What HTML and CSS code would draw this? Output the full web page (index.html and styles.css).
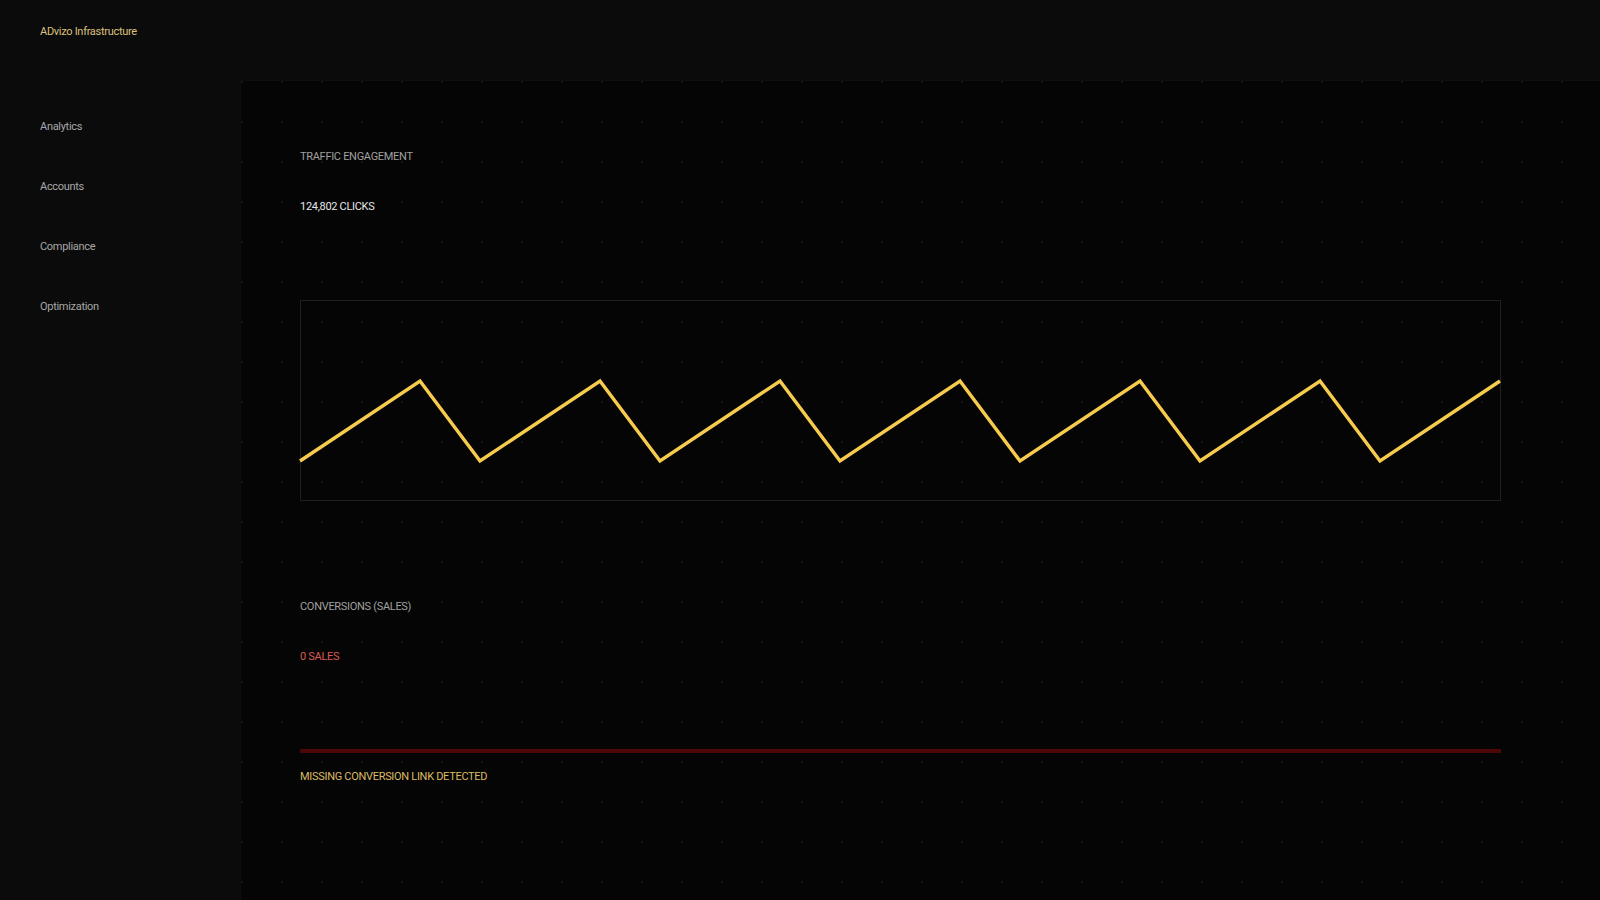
FILE: index.html
```html
<!DOCTYPE html>
<html lang="en">
	<head>
		<meta charset="UTF-8">
		<title>ADvizo Infrastructure</title>
		<link rel="stylesheet" href="styles.css">
	</head>
	<body>
		<div class="shell">
			<div class="topbar">
				<div class="brand">ADvizo Infrastructure</div>
			</div>
			<div class="layout">
				<div class="sidebar">
					<div class="nav-item">Analytics</div>
					<div class="nav-item">Accounts</div>
					<div class="nav-item">Compliance</div>
					<div class="nav-item">Optimization</div>
				</div>
				<div class="panel">
					<div class="content">
						<div class="label">TRAFFIC ENGAGEMENT</div>
						<div class="value">124,802 CLICKS</div>
						<div class="chart">
							<svg class="chart-svg" viewBox="0 0 1200 200" preserveAspectRatio="none">
								<polyline points="0,160 120,80 180,160 300,80 360,160 480,80 540,160 660,80 720,160 840,80 900,160 1020,80 1080,160 1200,80" />
							</svg>
						</div>

						<div class="label label-second">CONVERSIONS (SALES)</div>
						<div class="value value-alert">0 SALES</div>
						<div class="alert-bar"></div>
						<div class="warning">MISSING CONVERSION LINK DETECTED</div>
					</div>
				</div>
			</div>
		</div>
	</body>
</html>
```

FILE: styles.css
```css
html, body {
	margin: 0;
	padding: 0;
	background-color: #0b0b0b;
	font-family: Roboto, "Liberation Sans", Arial, sans-serif;
	font-size: 11px;
	letter-spacing: -0.3px;
}

.shell {
	width: 1600px;
	height: 900px;
	display: flex;
	flex-direction: column;
	overflow: hidden;
}

.topbar {
	height: 80px;
	flex: none;
	padding: 25px 40px 0;
	box-sizing: border-box;
}

.brand {
	color: #dcc17e;
	line-height: 14px;
}

.layout {
	flex: 1;
	display: flex;
}

.sidebar {
	width: 240px;
	flex: none;
	padding: 40px 40px 0;
	box-sizing: border-box;
}

.nav-item {
	color: #a8a8a8;
	line-height: 14px;
	margin-bottom: 46px;
}

.panel {
	flex: 1;
	background-color: #050505;
	background-image: radial-gradient(circle, #151515 1px, transparent 1.2px);
	background-size: 40px 40px;
	background-position: 21px 21px;
	border-left: 1px solid #0e0e0e;
	border-top: 1px solid #0e0e0e;
	padding: 69px 59px 0;
}

.content {
	width: 1201px;
}

.label {
	color: #a0a0a0;
	line-height: 14px;
	margin-bottom: 36px;
}

.label-second {
	margin-top: 99px;
}

.value {
	color: #e6e6e6;
	line-height: 14px;
	margin-bottom: 86px;
}

.value-alert {
	color: #dc5a55;
	margin-bottom: 85px;
}

.chart {
	height: 201px;
	box-sizing: border-box;
	border: 1px solid #1f1f1f;
	position: relative;
}

.chart-svg {
	position: absolute;
	left: -1px;
	top: 0;
	width: 1200px;
	height: 200px;
	overflow: visible;
}

.chart-svg polyline {
	fill: none;
	stroke: #f7cb4d;
	stroke-width: 3.5;
	stroke-linejoin: miter;
	vector-effect: non-scaling-stroke;
}

.alert-bar {
	height: 4px;
	background-color: #4d0707;
}

.warning {
	margin-top: 17px;
	color: #dcbb63;
	line-height: 14px;
}
```
